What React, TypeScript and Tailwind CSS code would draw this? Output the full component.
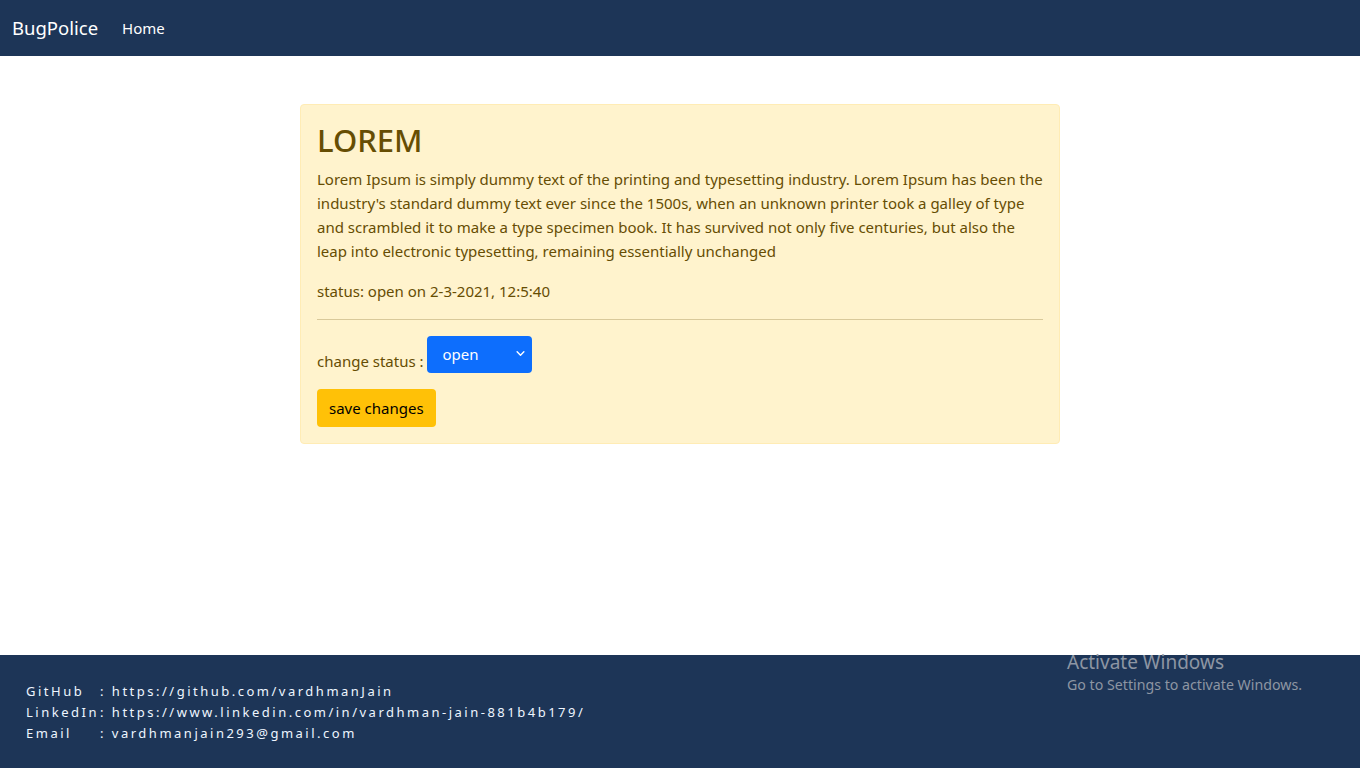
import React from "react";

export default function App() {
  const font = { fontFamily: '"Noto Sans", "Open Sans", Arial, sans-serif' };
  return (
    <div className="min-h-[768px] flex flex-col bg-white" style={font}>
      <nav className="h-[56px] bg-[#1d3557] flex items-center px-3 shrink-0">
        <span className="text-white text-[18.5px] mr-6">BugPolice</span>
        <span className="text-white text-[15px]">Home</span>
      </nav>
      <main className="flex-1 flex justify-center pt-12">
        <div className="w-[760px] h-fit bg-[#fff3cd] border border-[#ffecb5] rounded-[4px] px-4 pt-4 pb-4 text-[#664d03]">
          <h1 className="text-[31px] font-medium leading-[1.2] mb-2 mt-[1px]">LOREM</h1>
          <p className="text-[15px] leading-[24px] mb-4">
            Lorem Ipsum is simply dummy text of the printing and typesetting industry. Lorem Ipsum has been the
            industry's standard dummy text ever since the 1500s, when an unknown printer took a galley of type and
            scrambled it to make a type specimen book. It has survived not only five centuries, but also the leap
            into electronic typesetting, remaining essentially unchanged
          </p>
          <p className="text-[15px] leading-[24px]">status: open on 2-3-2021, 12:5:40</p>
          <hr className="my-4 border-t border-[#664d03] opacity-25" />
          <div className="flex items-center text-[15px] mt-4">
            <span className="mr-[3px] mt-[14px]">change status :</span>
            <div className="relative w-[105px] h-[37px] bg-[#0d6efd] rounded-[4px] text-white flex items-center pl-4">
              <span className="text-[15px]">open</span>
              <svg className="absolute right-[6px] top-[13px]" width="11" height="9" viewBox="0 0 16 16">
                <path d="M2 5l6 6 6-6" fill="none" stroke="white" strokeWidth="2.5" strokeLinecap="round" strokeLinejoin="round" />
              </svg>
            </div>
          </div>
          <button className="mt-4 h-[38px] px-3 bg-[#ffc107] rounded-[4px] text-[15px] text-black">save changes</button>
        </div>
      </main>
      <footer className="h-[113px] bg-[#1d3557] relative shrink-0 pt-[26px] pl-[26px]">
        <div className="text-[13px] leading-[21px] tracking-[2.5px] text-[#eef6ff]">
          <div className="flex"><span className="w-[74px]">GitHub</span><span>: https://github.com/vardhmanJain</span></div>
          <div className="flex"><span className="w-[74px]">LinkedIn</span><span>: https://www.linkedin.com/in/vardhman-jain-881b4b179/</span></div>
          <div className="flex"><span className="w-[74px]">Email</span><span>: vardhmanjain293@gmail.com</span></div>
        </div>
        <div className="absolute left-[1067px] top-[-5px] text-[#8d96a3]">
          <div className="text-[19px] leading-[24px]">Activate Windows</div>
          <div className="text-[14.2px] leading-[21px]">Go to Settings to activate Windows.</div>
        </div>
      </footer>
    </div>
  );
}
